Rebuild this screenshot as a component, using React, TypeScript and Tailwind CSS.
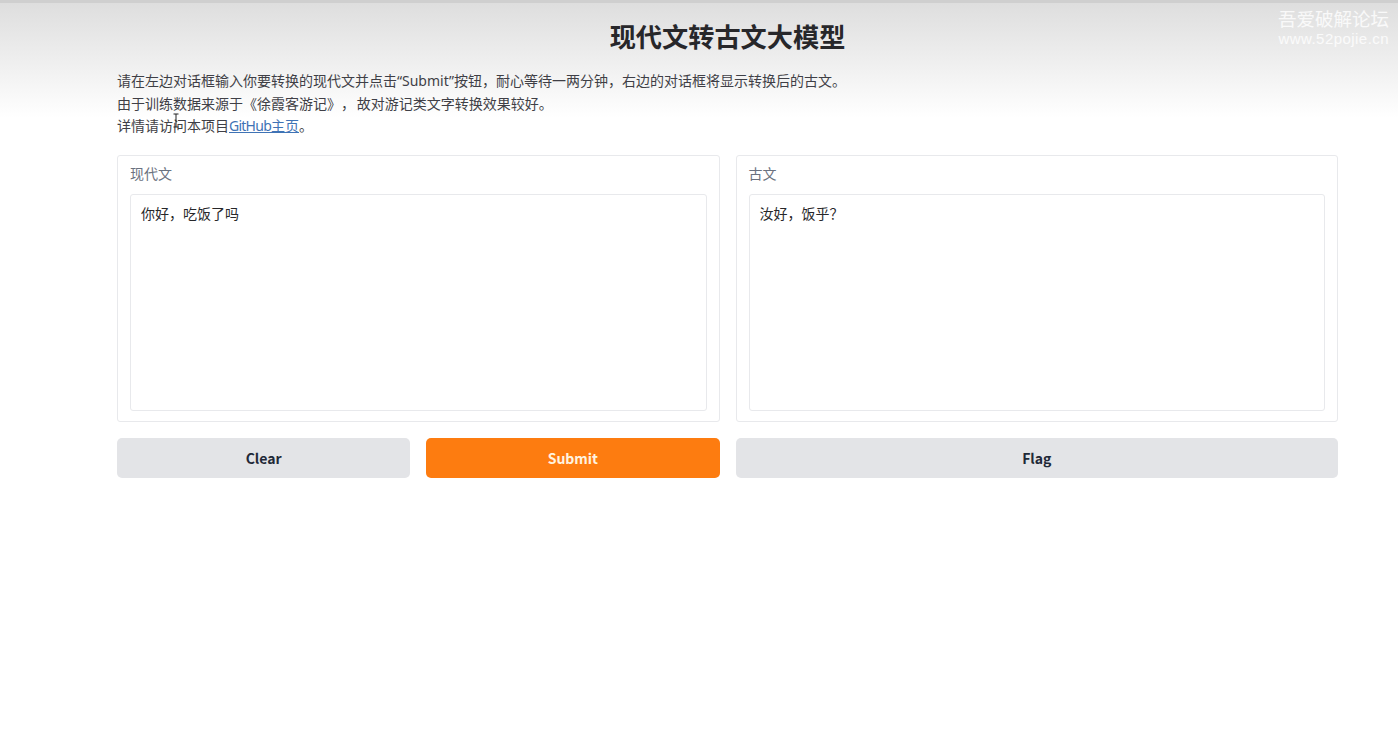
import { useState } from 'react'

const font = { fontFamily: '"Noto Sans", "Noto Sans CJK SC", sans-serif' }
const cjk = { fontFamily: '"Noto Sans CJK SC", sans-serif' }

function TextBox({ label, value }: { label: string; value: string }) {
  const [text, setText] = useState(value)
  return (
    <label style={cjk} className="flex h-[267px] flex-1 flex-col rounded-[3px] border border-[#e8e9ec] bg-white px-3 pt-[7px] pb-[10px]">
      <span className="mb-[11px] text-[14px] leading-[20px] text-[#6b7280]">{label}</span>
      <textarea
        value={text}
        onChange={(e) => setText(e.target.value)}
        style={cjk}
        className="flex-1 resize-none rounded-[3px] border border-[#e8e9ec] bg-white px-[10px] py-2 text-[14px] leading-[20px] text-[#27272a] outline-none"
      />
    </label>
  )
}

function ActionButton({ primary, className, children }: { primary?: boolean; className: string; children: string }) {
  return (
    <button
      style={cjk}
      className={
        (primary ? 'bg-[#fd7c10] text-[#fff3e0] ' : 'bg-[#e3e4e7] text-[#1f2937] ') +
        'h-10 rounded-[5px] pt-[2px] text-[14px] font-semibold ' +
        className
      }
    >
      {children}
    </button>
  )
}

export default function App() {
  return (
    <div style={font} className="relative h-[748px] overflow-hidden bg-white">
      <div className="h-[3px] bg-[#cfcfcf]" />
      <div className="bg-linear-to-b from-[#dedede] to-white to-[85%] pr-[60px] pl-[117px]">
        <h1 style={cjk} className="pt-[14px] text-center text-[26.2px] leading-[38px] font-bold text-[#27272a]">现代文转古文大模型</h1>
        <div className="pt-[15px] text-[14px] leading-[22.5px] text-[#3f3f46] [text-spacing-trim:space-all]">
          <p>请在左边对话框输入你要转换的现代文并点击“Submit”按钮，耐心等待一两分钟，右边的对话框将显示转换后的古文。</p>
          <p className="[word-spacing:-2px]">由于训练数据来源于《徐霞客游记》， 故对游记类文字转换效果较好。</p>
          <p>
            详情请访问本项目
            <a href="#" className="text-[#3f73b5] underline"><span className="tracking-[-0.75px]">GitHub</span>主页</a>。
          </p>
        </div>
      </div>

      <main style={cjk} className="mt-[17px] flex flex-col gap-4 pr-[60px] pl-[117px]">
        <div className="flex gap-4">
          <TextBox label="现代文" value="你好，吃饭了吗" />
          <TextBox label="古文" value="汝好，饭乎？" />
        </div>
        <div className="flex gap-4">
          <div className="flex flex-1 gap-4">
            <ActionButton className="flex-1">Clear</ActionButton>
            <ActionButton primary className="flex-1">Submit</ActionButton>
          </div>
          <ActionButton className="flex-1">Flag</ActionButton>
        </div>
      </main>

      {/* forum watermark, on top of the page */}
      <div className="absolute top-[6px] right-[9px] flex flex-col items-end text-white/80">
        <span style={cjk} className="text-[18.5px] leading-[24px]">吾爱破解论坛</span>
        <span style={{ fontFamily: '"Liberation Sans", sans-serif' }} className="text-[15px] leading-[18px] tracking-[0.45px]">www.52pojie.cn</span>
      </div>

      {/* text cursor */}
      <svg className="absolute top-[113px] left-[172px]" width="8" height="16" viewBox="0 0 8 16" fill="none" stroke="#222" strokeWidth="1">
        <path d="M1.5 1h5M4 1v13M1.5 14h5" />
      </svg>
    </div>
  )
}
